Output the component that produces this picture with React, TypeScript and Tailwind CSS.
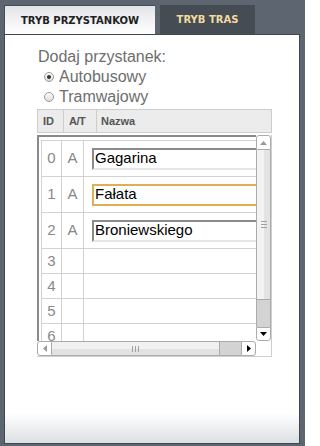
import React from "react";

type Row = { id: number; t?: string; name?: string; focus?: boolean };

const rows: Row[] = [
  { id: 0, t: "A", name: "Gagarina" },
  { id: 1, t: "A", name: "Fałata", focus: true },
  { id: 2, t: "A", name: "Broniewskiego" },
  { id: 3 },
  { id: 4 },
  { id: 5 },
  { id: 6 },
];

function Radio({ checked }: { checked?: boolean }) {
  return (
    <span className="ml-[6px] mr-[5px] mt-[-1px] flex h-[10px] w-[10px] items-center justify-center rounded-full border border-[#9a9a9a] bg-linear-to-b from-[#fdfdfd] to-[#dcdcdc]">
      {checked && <span className="h-[4px] w-[4px] rounded-full bg-[#333]" />}
    </span>
  );
}

function Tri({ dir, color }: { dir: "up" | "down" | "left" | "right"; color: string }) {
  const pts: Record<string, string> = {
    up: "0,4 7,4 3.5,0",
    down: "0,0 7,0 3.5,4",
    left: "4,0 4,7 0,3.5",
    right: "0,0 0,7 4,3.5",
  };
  const vertical = dir === "up" || dir === "down";
  return (
    <svg width={vertical ? 7 : 4} height={vertical ? 4 : 7} viewBox={vertical ? "0 0 7 4" : "0 0 4 7"}>
      <polygon points={pts[dir]} fill={color} />
    </svg>
  );
}

export default function App() {
  return (
    <div className="h-[446px] w-[305px] overflow-hidden bg-[#5d6670] pl-[4px] pt-[5px] font-['Liberation_Sans',Arial,sans-serif]">
      {/* Tabs */}
      <div className="flex h-[29px] font-['DejaVu_Sans',sans-serif] text-[10px] font-bold">
        <div className="flex w-[151px] items-center justify-center border-l border-t border-[#454c54] bg-linear-to-b from-[#e2e5e8] to-white text-[#222]">
          TRYB PRZYSTANKOW
        </div>
        <div className="ml-[5px] flex w-[95px] items-center justify-center bg-[#464c53] text-[#f2dba0]">
          TRYB TRAS
        </div>
      </div>

      {/* Panel */}
      <div className="flex h-[410px] w-[296px] flex-col border border-[#40474f] bg-white">
        <div className="pl-[33px] pt-[11px] text-[16px] text-[#6e6e6e]">
          <div className="h-[21px] leading-[21px]">Dodaj przystanek:</div>
          <div className="flex h-[20px] items-center leading-[20px]">
            <Radio checked />
            <span>Autobusowy</span>
          </div>
          <div className="flex h-[20px] items-center leading-[20px]">
            <Radio />
            <span>Tramwajowy</span>
          </div>
        </div>

        <div className="pl-[32px]">
          {/* Header */}
          <div className="mt-[2px] flex h-[24px] w-[235px] items-center border border-[#cdcdcd] bg-[#ececec] text-[11px] font-bold text-[#555]">
            <div className="flex h-full w-[26px] items-center border-r border-[#cdcdcd] pl-[5px]">ID</div>
            <div className="flex h-full w-[33px] items-center border-r border-[#cdcdcd] pl-[5px] tracking-[-0.5px]">A/T</div>
            <div className="flex h-full items-center pl-[4px]">Nazwa</div>
          </div>

          {/* Body */}
          <div className="mt-[2px] flex h-[222px] w-[235px] flex-col border-b border-r border-[#cfcfcf]">
            <div className="flex h-[206px]">
              {/* viewport */}
              <div className="w-[219px] overflow-hidden border-l-2 border-t-2 border-[#8a8a8a] pl-[2px] pt-[3px]">
                <div className="w-[245px] border-t border-[#d2d2d2]">
                  {rows.map((r) => (
                    <div
                      key={r.id}
                      className={`flex border-b border-[#d2d2d2] ${r.name ? "h-[36px]" : "h-[25px]"}`}
                    >
                      <div className="flex w-[21px] items-center justify-center border-x border-[#d2d2d2] text-[15px] text-[#888]">
                        {r.id}
                      </div>
                      <div className="flex w-[22px] items-center justify-center border-r border-[#d2d2d2] text-[15px] text-[#888]">
                        {r.t ?? ""}
                      </div>
                      <div className="flex flex-1 items-center pl-[8px]">
                        {r.name && (
                          <input
                            readOnly
                            value={r.name}
                            className={
                              r.focus
                                ? "h-[22px] w-[190px] border-2 border-[#e0ae55] bg-white px-[1px] font-['Liberation_Sans',Arial,sans-serif] text-[15px] text-black outline-none"
                                : "h-[22px] w-[190px] border-2 border-b-[#e6e6e6] border-l-[#8a8a8a] border-r-[#e6e6e6] border-t-[#8a8a8a] bg-white px-[1px] font-['Liberation_Sans',Arial,sans-serif] text-[15px] text-black outline-none"
                            }
                          />
                        )}
                      </div>
                    </div>
                  ))}
                </div>
              </div>
              {/* vertical scrollbar */}
              <div className="flex w-[15px] flex-col">
                <div className="flex h-[15px] items-center justify-center rounded-t-[3px] border border-[#ababab] bg-white">
                  <Tri dir="up" color="#9a9a9a" />
                </div>
                <div className="relative flex h-[150px] items-center justify-center border-x border-b border-[#ababab] bg-[linear-gradient(to_right,#f3f3f3_50%,#e3e3e3_50%)]">
                  <div className="flex flex-col gap-[2px]">
                    <span className="h-px w-[6px] bg-[#a0a0a0]" />
                    <span className="h-px w-[6px] bg-[#a0a0a0]" />
                    <span className="h-px w-[6px] bg-[#a0a0a0]" />
                  </div>
                </div>
                <div className="h-[27px] border-x border-[#ababab] bg-[#d3d3d3]" />
                <div className="flex h-[14px] items-center justify-center rounded-b-[3px] border border-[#ababab] bg-white">
                  <Tri dir="down" color="#000" />
                </div>
              </div>
            </div>
            <div className="flex h-[15px]">
              {/* horizontal scrollbar */}
              <div className="flex w-[219px]">
                <div className="flex w-[15px] items-center justify-center rounded-l-[3px] border border-[#ababab] bg-white">
                  <Tri dir="left" color="#9a9a9a" />
                </div>
                <div className="flex w-[168px] items-center justify-center border-y border-r border-[#ababab] bg-[linear-gradient(to_bottom,#f1f1f1_50%,#e2e2e2_50%)]">
                  <div className="flex gap-[2px]">
                    <span className="h-[6px] w-px bg-[#a0a0a0]" />
                    <span className="h-[6px] w-px bg-[#a0a0a0]" />
                    <span className="h-[6px] w-px bg-[#a0a0a0]" />
                  </div>
                </div>
                <div className="w-[21px] border-y border-[#ababab] bg-[#d3d3d3]" />
                <div className="flex w-[15px] items-center justify-center rounded-r-[3px] border border-[#ababab] bg-white">
                  <Tri dir="right" color="#000" />
                </div>
              </div>
              <div className="w-[15px] bg-white" />
            </div>
          </div>
        </div>

        <div className="flex-1" />
        <div className="h-[30px] bg-linear-to-b from-white to-[#dcdfe2]" />
      </div>
    </div>
  );
}
